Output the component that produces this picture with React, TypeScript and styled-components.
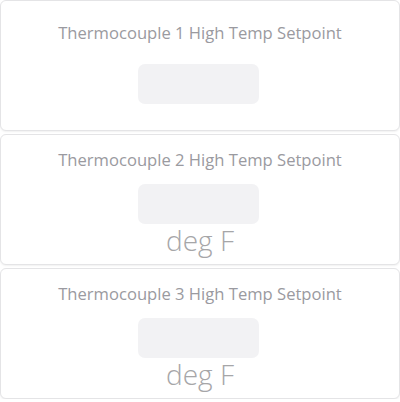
import React from 'react';
import styled, { createGlobalStyle } from 'styled-components';

const GlobalStyle = createGlobalStyle`
  body {
    margin: 0;
    background-color: #ffffff;
    font-family: "Open Sans", "Noto Sans", sans-serif;
  }
`;

const List = styled.div`
  display: flex;
  flex-direction: column;
  gap: 3px;
  width: 400px;
`;

const Card = styled.div<{ $hasUnit: boolean }>`
  box-sizing: border-box;
  height: 131px;
  display: flex;
  flex-direction: column;
  align-items: center;
  padding-top: ${p => (p.$hasUnit ? '14px' : '21px')};
  background-color: #ffffff;
  border: 1px solid #e4e4e6;
  border-radius: 6px;
  box-shadow: 0 1px 2px rgba(0, 0, 0, 0.06);
`;

const Title = styled.div`
  font-size: 16.6px;
  line-height: 22px;
  color: #9a9aa0;
`;

const ValueBox = styled.div<{ $hasUnit: boolean }>`
  margin-top: ${p => (p.$hasUnit ? '13px' : '20px')};
  margin-right: 4px;
  width: 121px;
  height: 40px;
  border-radius: 7px;
  background-color: #f2f2f4;
`;

const Unit = styled.div`
  margin-top: 1px;
  font-size: 28px;
  font-weight: 300;
  line-height: 30px;
  color: #a6a6a8;
`;

const setpoints = [
  { label: 'Thermocouple 1 High Temp Setpoint', unit: '' },
  { label: 'Thermocouple 2 High Temp Setpoint', unit: 'deg F' },
  { label: 'Thermocouple 3 High Temp Setpoint', unit: 'deg F' },
];

export default function App() {
  return (
    <>
      <GlobalStyle />
      <List>
        {setpoints.map(s => (
          <Card key={s.label} $hasUnit={!!s.unit}>
            <Title>{s.label}</Title>
            <ValueBox $hasUnit={!!s.unit} />
            {s.unit && <Unit>{s.unit}</Unit>}
          </Card>
        ))}
      </List>
    </>
  );
}
